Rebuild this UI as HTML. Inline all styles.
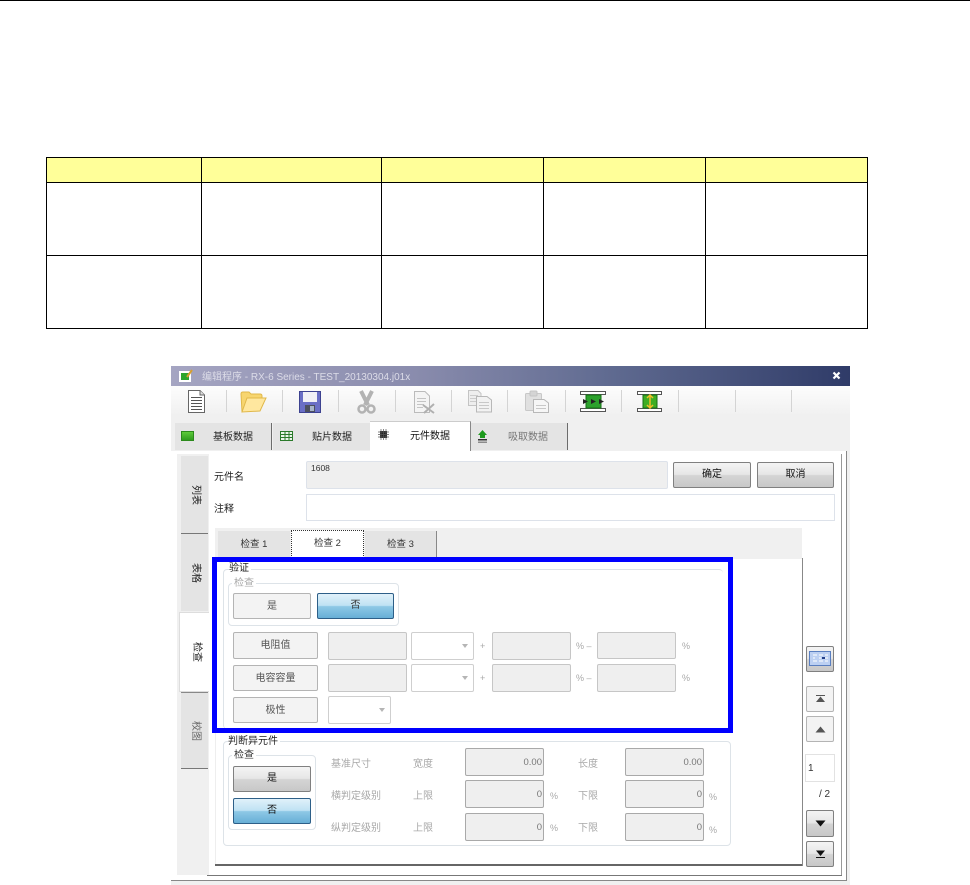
<!DOCTYPE html>
<html lang="zh"><head><meta charset="utf-8"><title>编辑程序</title>
<style>
html,body{margin:0;padding:0;background:#fff;width:970px;height:885px;overflow:hidden}
body{position:relative;font-family:"Liberation Sans","Noto Sans CJK SC",sans-serif;font-size:10px;color:#222}
div,svg,span{position:absolute;box-sizing:border-box}
.l{background:#000}
.t{white-space:nowrap;line-height:14px;height:14px}
.g{color:#a8a8a8}
.btn{border:1px solid #b4b4b4;border-radius:2px;background:#f3f3f3;text-align:center;color:#555;line-height:26px}
.act{border:1px solid #808080;border-radius:2px;background:linear-gradient(#f4f4f4 0,#e6e6e6 48%,#d4d4d4 52%,#c8c8c8 100%);text-align:center;color:#111;line-height:24px}
.blue{border:1px solid #2d5f88;border-radius:2px;background:linear-gradient(#e0f1fa 0,#bfe2f3 48%,#8ec8e6 52%,#67afd6 100%);text-align:center;color:#333;line-height:24px}
.f{background:#efefef;border:1px solid #c6c6c6;border-radius:2px}
.fd{background:#efefef;border:1px solid #a9a9a9;border-radius:2px;text-align:right;color:#777;font-size:9.5px;line-height:28px;padding-right:1px}
.cb{background:#fff;border:1px solid #cfcfcf;border-radius:2px}
.cb:after{content:"";position:absolute;right:5px;top:11px;border:3.500px solid transparent;border-top:4px solid #b5b5b5;border-bottom:0}
.gb{border:1px solid #dde3e8;border-radius:4px}
.sep{width:1px;height:22px;top:390px;background:#d4d4d4}
.tab{background:#e4e4e4;line-height:29px;color:#222;text-align:left}
.itab{background:#e4e4e4;line-height:28px;color:#333;text-align:center;font-size:9.5px}
.vt{writing-mode:vertical-rl;text-orientation:sideways;text-align:center;line-height:25px;font-size:10px;color:#222}
</style></head><body>
<div class="l" style="left:0;top:0;width:970px;height:1px"></div>

<!-- table -->
<div style="left:46px;top:157px;width:822px;height:26px;background:#ffff99"></div>
<div class="l" style="left:46px;top:157px;width:822px;height:1px"></div>
<div class="l" style="left:46px;top:182px;width:822px;height:1px"></div>
<div class="l" style="left:46px;top:255px;width:822px;height:1px"></div>
<div class="l" style="left:46px;top:328px;width:822px;height:1px"></div>
<div class="l" style="left:46px;top:157px;width:1px;height:172px"></div>
<div class="l" style="left:201px;top:157px;width:1px;height:172px"></div>
<div class="l" style="left:381px;top:157px;width:1px;height:172px"></div>
<div class="l" style="left:543px;top:157px;width:1px;height:172px"></div>
<div class="l" style="left:705px;top:157px;width:1px;height:172px"></div>
<div class="l" style="left:867px;top:157px;width:1px;height:172px"></div>

<!-- window -->
<div style="left:171px;top:366px;width:679px;height:519px;background:#f0f0f0"></div>
<div style="left:171px;top:366px;width:679px;height:20px;background:linear-gradient(90deg,#a5a5c2 0,#8b8dae 35%,#5f6a90 65%,#2f3b68 100%)"></div>
<svg style="left:178px;top:369px" width="16" height="14" viewBox="0 0 16 14"><rect x="1" y="2" width="12" height="11" fill="#fff"/><rect x="3" y="4" width="8" height="7" fill="#2ea52e"/><path d="M9 8L14 1" stroke="#d9a030" stroke-width="2"/></svg>
<div class="t" style="left:202px;top:371px;color:#dcdce8;font-size:10px">编辑程序 - RX-6 Series - TEST_20130304.j01x</div>
<svg style="left:832px;top:371px" width="9" height="9" viewBox="0 0 9 9"><path d="M1.500 1.500L7.500 7.500M7.500 1.500L1.500 7.500" stroke="#fff" stroke-width="2.200"/></svg>

<!-- toolbar -->
<div style="left:171px;top:386px;width:679px;height:30px;background:linear-gradient(#fdfdfd,#f0f0f0)"></div>
<div class="sep" style="left:226px"></div><div class="sep" style="left:282px"></div><div class="sep" style="left:338px"></div><div class="sep" style="left:395px"></div><div class="sep" style="left:451px"></div><div class="sep" style="left:507px"></div><div class="sep" style="left:565px"></div><div class="sep" style="left:621px"></div><div class="sep" style="left:678px"></div><div class="sep" style="left:735px"></div><div class="sep" style="left:791px"></div>

<svg style="left:187px;top:389px" width="19" height="25" viewBox="0 0 19 25"><path d="M1.500 1.500H13L17.500 6V23.500H1.500Z" fill="#fff" stroke="#666"/><path d="M13 1.500V6H17.500" fill="#ddd" stroke="#666"/><path d="M4 8.500H15M4 11.500H15M4 14.500H15M4 17.500H15M4 20.500H15" stroke="#555"/></svg>
<svg style="left:240px;top:390px" width="27" height="24" viewBox="0 0 27 24"><path d="M2 22L1 4Q1 2 3 2H9L11 4H20Q22 4 22 6V8H8Z" fill="#f7d56f" stroke="#e0b84a"/><path d="M2 22L7 8H26L20 21Z" fill="#ffe79f" stroke="#e0b84a"/></svg>
<svg style="left:299px;top:391px" width="22" height="22" viewBox="0 0 22 22"><rect width="21" height="21" x=".5" y=".5" fill="#6a6fc6" stroke="#3d4290"/><rect x="4" y="1" width="14" height="10" fill="#f1f1f6"/><rect x="6" y="14" width="10" height="7" fill="#4c5060"/><rect x="11" y="15" width="4" height="5" fill="#a7b5c9"/></svg>
<svg style="left:357px;top:390px" width="19" height="24" viewBox="0 0 19 24"><path d="M4 1L11 15M15 1L8 15" stroke="#b3b3b3" stroke-width="4"/><circle cx="5" cy="19" r="3.500" fill="none" stroke="#b3b3b3" stroke-width="2.500"/><circle cx="14" cy="19" r="3.500" fill="none" stroke="#b3b3b3" stroke-width="2.500"/></svg>
<svg style="left:413px;top:390px" width="23" height="24" viewBox="0 0 23 24"><path d="M1.500 1.500H12L16.500 6V22.500H1.500Z" fill="#f4f4f4" stroke="#bbb"/><path d="M4 8.500H13M4 11.500H13M4 14.500H11M4 17.500H10" stroke="#c4c4c4"/><path d="M10 15L21 23M21 14L11 23" stroke="#b0b0b0" stroke-width="2"/></svg>
<svg style="left:467px;top:389px" width="26" height="24" viewBox="0 0 26 24"><path d="M1.500 1.500H11L14 4.500V16.500H1.500Z" fill="#eee" stroke="#c4c4c4"/><path d="M3 6.500H11M3 9.500H11M3 12.500H11" stroke="#ccc"/><path d="M9.500 7.500H20L24.500 11V23H9.500Z" fill="#f2f2f2" stroke="#b8b8b8"/><path d="M12 13.500H22M12 16.500H22M12 19.500H22" stroke="#c8c8c8"/></svg>
<svg style="left:524px;top:390px" width="26" height="23" viewBox="0 0 26 23"><rect x="1.500" y="3.500" width="16" height="17" rx="1" fill="#e0e0e0" stroke="#c8c8c8"/><rect x="6" y="1" width="7" height="5" rx="1" fill="#d4d4d4" stroke="#c4c4c4"/><path d="M9.500 9.500H20L24.500 13V22.500H9.500Z" fill="#f6f6f6" stroke="#b8b8b8"/><path d="M12 15.500H22M12 18.500H22" stroke="#c8c8c8"/></svg>
<svg style="left:580px;top:391px" width="27" height="22" viewBox="0 0 27 22"><rect x=".5" y=".5" width="25" height="3" fill="#fff" stroke="#555"/><rect x=".5" y="17.500" width="25" height="3" fill="#fff" stroke="#555"/><rect x="6" y="4" width="15" height="13" fill="#2ca12c" stroke="#157015"/><path d="M3 8L8 10.500L3 13ZM11 8L16 10.500L11 13ZM19 8L24 10.500L19 13Z" fill="#222"/></svg>
<svg style="left:637px;top:391px" width="26" height="22" viewBox="0 0 26 22"><rect x=".5" y=".5" width="24" height="3" fill="#fff" stroke="#555"/><rect x=".5" y="17.500" width="24" height="3" fill="#fff" stroke="#555"/><rect x="6" y="4" width="14" height="13" fill="#3fae24" stroke="#157015"/><path d="M13 4V17M10 7L13 4L16 7M10 14L13 17L16 14" stroke="#f3bf2a" stroke-width="1.500" fill="none"/></svg>

<!-- main tabs -->
<div class="tab" style="left:175px;top:423px;width:97px;height:27px;border-right:1px solid #6c6c6c;padding-left:38px">基板数据</div>
<div class="tab" style="left:273px;top:423px;width:97px;height:27px;padding-left:39px">贴片数据</div>
<div class="tab" style="left:370px;top:421px;width:101px;height:31px;background:#fff;border-top:1px solid #ccc;border-right:1px solid #888;padding-left:40px;line-height:30px;color:#111">元件数据</div>
<div class="tab" style="left:471px;top:423px;width:97px;height:27px;border-right:1px solid #6c6c6c;color:#777;padding-left:37px">吸取数据</div>
<div style="left:181px;top:431px;width:13px;height:10px;background:linear-gradient(#5ecb3a,#2f9c1e);border:1px solid #2c8a1c"></div>
<svg style="left:280px;top:431px" width="13" height="10" viewBox="0 0 13 10"><rect x=".5" y=".5" width="12" height="9" fill="#eaf5ea" stroke="#2a7a2a"/><path d="M1 3.500H12M1 6.500H12M5 1V9M9 1V9" stroke="#2a7a2a"/></svg>
<svg style="left:378px;top:429px" width="11" height="11" viewBox="0 0 11 11"><rect x="2" y="2" width="7" height="7" fill="#222"/><path d="M0 3H11M0 5.500H11M0 8H11M3 0V11M5.500 0V11M8 0V11" stroke="#555" stroke-width=".7"/></svg>
<svg style="left:477px;top:430px" width="11" height="13" viewBox="0 0 11 13"><path d="M5.500 0L10 5H1Z" fill="#1e9a1e"/><rect x="3" y="4" width="5" height="4" fill="#1e9a1e"/><rect x="1" y="9" width="9" height="1.500" fill="#333"/><rect x="1" y="11.500" width="9" height="1.500" fill="#8c8c8c"/></svg>

<!-- frame -->
<div style="left:171px;top:451px;width:676px;height:430px;background:#fff;border-right:1px solid #888;border-bottom:1px solid #888"></div>
<div style="left:177px;top:454px;width:32px;height:421px;background:#f0f0f0"></div>
<div style="left:209px;top:454px;width:633px;height:421px;background:#fff;border-right:1px solid #999"></div>
<div style="left:207px;top:875px;width:635px;height:1px;background:#777"></div>

<!-- vertical tabs -->
<div class="vt" style="left:181px;top:456px;width:27px;height:78px;background:#e4e4e4;border-bottom:1px solid #777">列表</div>
<div class="vt" style="left:181px;top:534px;width:27px;height:77px;background:#e4e4e4">表格</div>
<div class="vt" style="left:179px;top:612px;width:30px;height:80px;background:#fff;border:1px solid #ddd;border-right:0">检查</div>
<div class="vt" style="left:181px;top:692px;width:27px;height:77px;background:#e4e4e4;border-top:1px solid #888;border-bottom:1px solid #777;color:#666">校图</div>

<!-- top fields -->
<div class="t" style="left:214px;top:471px">元件名</div>
<div class="t" style="left:214px;top:503px">注释</div>
<div style="left:306px;top:461px;width:362px;height:28px;background:#efefef;border:1px solid #dde2ea;border-radius:2px"></div>
<div class="t" style="left:311px;top:461px;font-size:8.500px;color:#333">1608</div>
<div class="act" style="left:673px;top:462px;width:78px;height:26px">确定</div>
<div class="act" style="left:757px;top:462px;width:77px;height:26px">取消</div>
<div style="left:306px;top:494px;width:529px;height:27px;background:#fff;border:1px solid #dde2ea"></div>

<!-- inner tabs -->
<div style="left:215px;top:528px;width:587px;height:31px;background:#f0f0f0"></div>
<div class="itab" style="left:218px;top:531px;width:72px;height:27px">检查 1</div>
<div class="itab" style="left:291px;top:530px;width:73px;height:28px;background:#fff;border:1px dotted #333;line-height:25px">检查 2</div>
<div class="itab" style="left:365px;top:531px;width:72px;height:27px;border-right:1px solid #888">检查 3</div>
<div style="left:215px;top:558px;width:1px;height:308px;background:#eee"></div>
<div style="left:215px;top:864px;width:587px;height:2px;background:#666"></div>
<div style="left:802px;top:558px;width:1px;height:308px;background:#888"></div>

<!-- group 验证 -->
<div class="gb" style="left:223px;top:569px;width:500px;height:160px;border-right:0;border-bottom:0"></div>
<div class="t" style="left:229px;top:562px;height:12px;background:#fff;padding-right:2px;color:#222">验证</div>
<div class="gb" style="left:228px;top:583px;width:171px;height:43px"></div>
<div class="t g" style="left:232px;top:577px;background:#fff;padding:0 2px;font-size:10px">检查</div>
<div class="btn" style="left:233px;top:593px;width:78px;height:26px">是</div>
<div class="blue" style="left:317px;top:593px;width:77px;height:26px">否</div>

<div class="btn" style="left:233px;top:632px;width:85px;height:27px">电阻值</div>
<div class="f" style="left:328px;top:632px;width:79px;height:28px"></div>
<div class="cb" style="left:411px;top:632px;width:63px;height:28px"></div>
<div class="t g" style="left:480px;top:639px;font-size:9px">+</div>
<div class="f" style="left:492px;top:632px;width:79px;height:28px"></div>
<div class="t g" style="left:576px;top:639px;font-size:9px">% –</div>
<div class="f" style="left:597px;top:632px;width:79px;height:27px"></div>
<div class="t g" style="left:682px;top:639px;font-size:9px">%</div>

<div class="btn" style="left:233px;top:665px;width:85px;height:26px">电容容量</div>
<div class="f" style="left:328px;top:664px;width:79px;height:28px"></div>
<div class="cb" style="left:411px;top:664px;width:63px;height:28px"></div>
<div class="t g" style="left:480px;top:671px;font-size:9px">+</div>
<div class="f" style="left:492px;top:664px;width:79px;height:28px"></div>
<div class="t g" style="left:576px;top:671px;font-size:9px">% –</div>
<div class="f" style="left:597px;top:664px;width:79px;height:28px"></div>
<div class="t g" style="left:682px;top:671px;font-size:9px">%</div>

<div class="btn" style="left:233px;top:697px;width:85px;height:26px;line-height:25px">极性</div>
<div class="cb" style="left:328px;top:696px;width:63px;height:28px"></div>

<!-- blue highlight -->
<div style="left:212px;top:557px;width:521px;height:176px;border:5px solid #0000ff"></div>

<!-- group 判断异元件 -->
<div class="gb" style="left:223px;top:741px;width:508px;height:105px"></div>
<div class="t" style="left:228px;top:735px;background:#fff;padding-right:2px">判断异元件</div>
<div class="gb" style="left:228px;top:755px;width:88px;height:75px"></div>
<div class="t" style="left:232px;top:749px;background:#fff;padding:0 2px;color:#333">检查</div>
<div class="act" style="left:233px;top:766px;width:78px;height:26px">是</div>
<div class="blue" style="left:233px;top:798px;width:78px;height:26px;color:#111">否</div>

<div class="t g" style="left:331px;top:758px">基准尺寸</div>
<div class="t g" style="left:413px;top:758px">宽度</div>
<div class="fd" style="left:465px;top:748px;width:79px;height:28px">0.00</div>
<div class="t g" style="left:578px;top:758px">长度</div>
<div class="fd" style="left:625px;top:748px;width:79px;height:28px">0.00</div>

<div class="t g" style="left:331px;top:790px">横判定级别</div>
<div class="t g" style="left:413px;top:790px">上限</div>
<div class="fd" style="left:465px;top:780px;width:79px;height:28px">0</div>
<div class="t g" style="left:550px;top:789px;font-size:9px">%</div>
<div class="t g" style="left:578px;top:790px">下限</div>
<div class="fd" style="left:625px;top:780px;width:79px;height:28px">0</div>
<div class="t g" style="left:709px;top:790px;font-size:9px">%</div>

<div class="t g" style="left:331px;top:822px">纵判定级别</div>
<div class="t g" style="left:413px;top:822px">上限</div>
<div class="fd" style="left:465px;top:813px;width:79px;height:28px">0</div>
<div class="t g" style="left:550px;top:821px;font-size:9px">%</div>
<div class="t g" style="left:578px;top:822px">下限</div>
<div class="fd" style="left:625px;top:813px;width:79px;height:28px">0</div>
<div class="t g" style="left:709px;top:823px;font-size:9px">%</div>

<!-- right side -->
<div class="act" style="left:806px;top:646px;width:28px;height:26px"></div>
<svg style="left:809px;top:651px" width="22" height="15" viewBox="0 0 22 15"><rect x=".5" y=".5" width="21" height="14" fill="#bcd0f2" stroke="#5a7fc0"/><path d="M4 4H8M10 4H14M16 4H19M4 7H6M10 7H12M15 7H19M4 10H8M10 10H14M16 10H19" stroke="#fff"/><rect x="13" y="6" width="3" height="2" fill="#23408a"/></svg>
<div class="btn" style="left:806px;top:686px;width:28px;height:26px"></div>
<svg style="left:815px;top:695px" width="11" height="8" viewBox="0 0 11 8"><path d="M1 .5H10" stroke="#555"/><path d="M5.500 1.500L10 7H1Z" fill="#555"/></svg>
<div class="btn" style="left:806px;top:716px;width:28px;height:26px"></div>
<svg style="left:815px;top:726px" width="11" height="7" viewBox="0 0 11 7"><path d="M5.500 .5L10.500 6.500H.5Z" fill="#555"/></svg>
<div style="left:805px;top:754px;width:30px;height:28px;background:#fff;border:1px solid #e2e2e2"></div>
<div class="t" style="left:808px;top:762px;font-size:10px;color:#333">1</div>
<div class="t" style="left:819px;top:788px;font-size:10px;color:#333">/ 2</div>
<div class="act" style="left:806px;top:810px;width:28px;height:27px"></div>
<svg style="left:815px;top:820px" width="11" height="7" viewBox="0 0 11 7"><path d="M.5 .5H10.500L5.500 6.500Z" fill="#111"/></svg>
<div class="act" style="left:806px;top:841px;width:28px;height:26px"></div>
<svg style="left:815px;top:850px" width="11" height="8" viewBox="0 0 11 8"><path d="M1 .5H10L5.500 6Z" fill="#111"/><path d="M1 7.500H10" stroke="#111"/></svg>
</body></html>
